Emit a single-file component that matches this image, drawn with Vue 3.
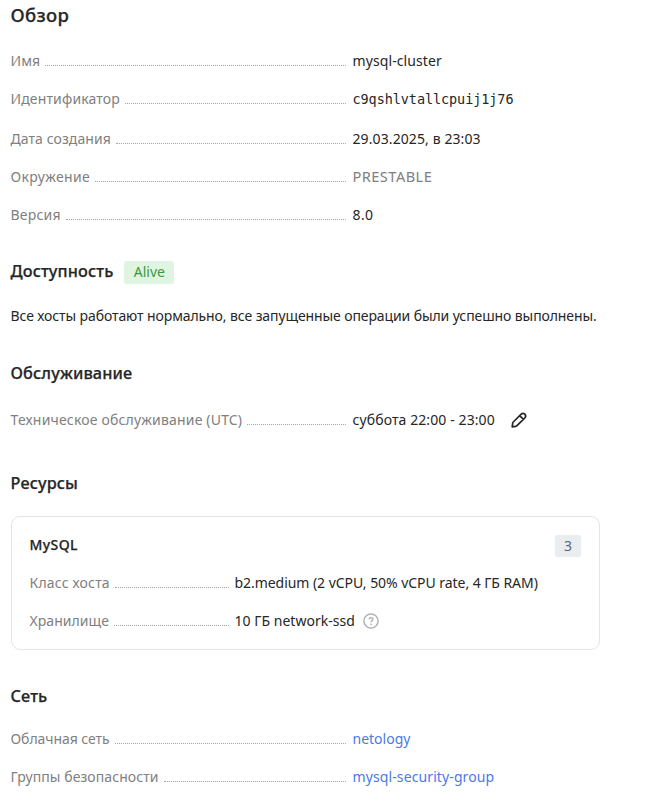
<script setup>
const overview = [
  { term: 'Имя', value: 'mysql-cluster', termSpacing: 0.1, spacing: 0.1 },
  { term: 'Идентификатор', value: 'c9qshlvtallcpuij1j76', kind: 'mono', termSpacing: 0.14, spacing: -0.08 },
  { term: 'Дата создания', value: '29.03.2025, в 23:03', termSpacing: 0.08, spacing: 0.1 },
  { term: 'Окружение', value: 'PRESTABLE', kind: 'muted', termSpacing: 0.35, spacing: 0.45 },
  { term: 'Версия', value: '8.0', termSpacing: 0.2, spacing: 0.4 },
]
const resources = [
  { term: 'Класс хоста', value: 'b2.medium (2 vCPU, 50% vCPU rate, 4 ГБ RAM)', termSpacing: 0.17, spacing: -0.05 },
  { term: 'Хранилище', value: '10 ГБ network-ssd', help: true, termSpacing: 0.05, spacing: 0.03 },
]
const network = [
  { term: 'Облачная сеть', value: 'netology', termSpacing: -0.06, spacing: 0 },
  { term: 'Группы безопасности', value: 'mysql-security-group', termSpacing: 0.08, spacing: 0.11 },
]
const tracking = (value) => ({ letterSpacing: value + 'px' })
</script>

<template>
  <main class="page">
    <section class="overview">
      <h1 class="title">Обзор</h1>
      <dl class="list">
        <div v-for="row in overview" :key="row.term" class="row" :class="row.kind">
          <dt class="term"><span class="label" :style="tracking(row.termSpacing)">{{ row.term }}</span><i class="dots"></i></dt>
          <dd class="value"><span :style="tracking(row.spacing)">{{ row.value }}</span></dd>
        </div>
      </dl>
    </section>

    <section class="availability">
      <h2 class="heading">Доступность <span class="badge alive">Alive</span></h2>
      <p class="text">Все хосты работают нормально, все запущенные операции были успешно выполнены.</p>
    </section>

    <section class="maintenance">
      <h2 class="heading">Обслуживание</h2>
      <dl class="list">
        <div class="row">
          <dt class="term"><span class="label">Техническое обслуживание (UTC)</span><i class="dots"></i></dt>
          <dd class="value">
            <span class="window">суббота 22:00 - 23:00</span>
            <svg class="pencil" viewBox="0 0 16 16" width="16" height="16" fill="none" stroke="currentColor" stroke-width="1.7" stroke-linejoin="round">
              <path d="M1.2 14.8 1.7 11.2Q1.8 10.5 2.3 10L10.2 2.1Q12 .5 13.8 2.2 15.5 4 13.9 5.8L6 13.7Q5.5 14.2 4.8 14.3ZM8.7 3.6l3.7 3.7" />
            </svg>
          </dd>
        </div>
      </dl>
    </section>

    <section class="resources">
      <h2 class="heading">Ресурсы</h2>
      <div class="card">
        <header class="card-head">
          <h3 class="card-title">MySQL</h3>
          <span class="badge count">3</span>
        </header>
        <dl class="list narrow">
          <div v-for="row in resources" :key="row.term" class="row">
            <dt class="term"><span class="label" :style="tracking(row.termSpacing)">{{ row.term }}</span><i class="dots"></i></dt>
            <dd class="value">
              <span :style="tracking(row.spacing)">{{ row.value }}</span>
              <svg v-if="row.help" class="help" viewBox="0 0 16 16" width="16" height="16" fill="none" stroke="currentColor" stroke-width="1.5">
                <circle cx="8" cy="8" r="7.1" />
                <path d="M6.1 6.3Q6.2 4.7 8 4.7T9.9 6.3Q9.9 7.2 8.9 7.7 8 8.2 8 9.3" />
                <circle cx="8" cy="11.3" r=".9" fill="currentColor" stroke="none" />
              </svg>
            </dd>
          </div>
        </dl>
      </div>
    </section>

    <section class="network">
      <h2 class="heading">Сеть</h2>
      <dl class="list">
        <div v-for="row in network" :key="row.term" class="row">
          <dt class="term"><span class="label" :style="tracking(row.termSpacing)">{{ row.term }}</span><i class="dots"></i></dt>
          <dd class="value"><a class="link" :style="tracking(row.spacing)">{{ row.value }}</a></dd>
        </div>
      </dl>
    </section>
  </main>
</template>

<style>
body {
  background: #fff;
}
</style>

<style scoped>
.page {
  box-sizing: border-box;
  width: 653px;
  height: 803px;
  overflow: hidden;
  padding: 3px 53px 0 10.5px;
  color: #262626;
  font: 14px/20px 'Noto Sans', sans-serif;
  white-space: nowrap;
}
h1, h2, h3, p, dl, dd {
  margin: 0;
}
.title,
.heading,
.card-title {
  font-weight: 500;
  -webkit-text-stroke: 0.25px currentColor;
}
.title {
  font-size: 18.5px;
  line-height: 24px;
  letter-spacing: 0.3px;
}
.heading {
  display: flex;
  align-items: center;
  gap: 11px;
  height: 24px;
  font-size: 16.3px;
  line-height: 24px;
  letter-spacing: 0.12px;
}
.list {
  display: flex;
  flex-direction: column;
  gap: 18px;
}
.row {
  display: flex;
  height: 20px;
}
.row.mono {
  height: 22px;
}
.term {
  display: flex;
  flex: none;
  width: 335.5px;
  color: #808080;
}
.narrow .term {
  width: 199.5px;
}
.label {
  flex: none;
}
.maintenance .label {
  letter-spacing: 0.18px;
}
.window {
  letter-spacing: 0.1px;
}
.dots {
  flex: 1;
  height: 14px;
  margin-left: 5px;
  border-bottom: 1px dotted #a6a6a6;
}
.value {
  display: flex;
  align-items: center;
  height: 20px;
  margin-left: 6.5px;
}
.narrow .value {
  margin-left: 5.5px;
}
.mono .value {
  font: 13.5px/20px 'DejaVu Sans Mono', monospace;
}
.muted .value {
  height: 18px;
  color: #808080;
  font-size: 14.6px;
  line-height: 18px;
}
.link {
  color: #4d78ea;
}
.overview .list {
  margin-top: 24px;
}
.availability {
  margin-top: 34px;
}
.badge {
  box-sizing: border-box;
  border-radius: 3px;
  font-size: 14px;
  font-weight: 400;
  text-align: center;
}
.alive {
  width: 50px;
  height: 23px;
  margin-top: 2px;
  line-height: 22px;
  letter-spacing: 0;
  color: #3c983c;
  background: #e0f5e1;
  -webkit-text-stroke: 0;
}
.text {
  margin-top: 23px;
  letter-spacing: -0.1px;
}
.maintenance {
  margin-top: 35px;
}
.maintenance .list {
  margin-top: 25px;
}
.pencil {
  margin-left: 16.5px;
}
.resources {
  margin-top: 41px;
}
.card {
  box-sizing: border-box;
  width: 589px;
  height: 134px;
  margin-top: 21px;
  margin-left: 0.5px;
  padding: 17px 18px 0 17.5px;
  border: 1px solid #e5e5e5;
  border-radius: 9px;
}
.card-head {
  display: flex;
  justify-content: space-between;
  height: 22px;
}
.card-title {
  font-size: 14px;
  line-height: 22px;
  letter-spacing: 0.4px;
}
.count {
  width: 26px;
  height: 22px;
  margin-top: 1px;
  line-height: 22px;
  color: #576680;
  background: #e9edf0;
}
.card .list {
  margin-top: 17px;
}
.help {
  margin-left: 8px;
  color: #b3b3b3;
}
.network {
  margin-top: 34px;
}
.network .list {
  margin-top: 21px;
}
</style>
